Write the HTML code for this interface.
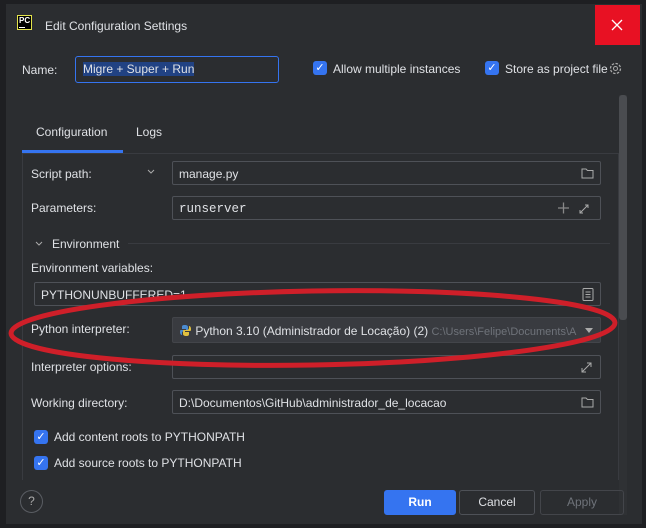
<!DOCTYPE html>
<html><head><style>
*{box-sizing:border-box;margin:0;padding:0}
body{width:646px;height:528px;background:#1e1f22;font-family:"Liberation Sans",sans-serif;color:#dfe1e5;font-size:12px;position:relative;overflow:hidden}
.dlg{position:absolute;left:6px;top:4px;width:636px;height:520px;background:#2b2d30}
.a{position:absolute;white-space:nowrap}
.f{position:absolute;border:1px solid #4e5157;background:#2b2d30;border-radius:2px;padding:5px 6px;height:24px}
.cb{position:absolute;width:14px;height:14px;background:#3574f0;border-radius:3px;color:#fff;font-size:11px;line-height:14px;text-align:center}
.btn{position:absolute;height:25px;border:1px solid #4e5157;border-radius:3px;text-align:center;line-height:23px}
</style></head><body>
<div class="dlg"></div>
<div class="a" style="left:17px;top:15px;width:15px;height:15px;background:#000;border:1px solid #e3e34a;color:#fff;font-size:8px;font-weight:bold;line-height:9px;padding-left:1px">PC<div style="width:6px;height:1px;background:#fff;margin-top:2px"></div></div>
<div class="a" style="left:45px;top:19px;font-size:12px">Edit Configuration Settings</div>
<div class="a" style="left:595px;top:5px;width:45px;height:40px;background:#e81123"><svg width="45" height="40"><path d="M17 15L27 25M27 15L17 25" stroke="#fff" stroke-width="1.3"/></svg></div>
<div class="a" style="left:22px;top:63px">Name:</div>
<div class="a" style="left:75px;top:56px;width:204px;height:27px;border:1.5px solid #3574f0;border-radius:3px;padding:5px 7px"><span style="background:#214283">Migre + Super + Run</span></div>
<div class="cb" style="left:313px;top:61px">✓</div>
<div class="a" style="left:333px;top:62px">Allow multiple instances</div>
<div class="cb" style="left:485px;top:61px">✓</div>
<div class="a" style="left:505px;top:62px">Store as project file</div>
<svg class="a" style="left:608px;top:61px" width="15" height="15"><circle cx="7.5" cy="7.5" r="5" fill="none" stroke="#aaa" stroke-width="1.3" stroke-dasharray="2.5 1.4"/><circle cx="7.5" cy="7.5" r="2" fill="none" stroke="#aaa"/></svg>
<div class="a" style="left:619px;top:95px;width:8px;height:420px;background:#2f3134"></div>
<div class="a" style="left:619px;top:95px;width:8px;height:225px;background:#4a4c50;border-radius:3px"></div>
<div class="a" style="left:36px;top:125px">Configuration</div>
<div class="a" style="left:136px;top:125px">Logs</div>
<div class="a" style="left:22px;top:150px;width:101px;height:3px;background:#3574f0"></div>
<div class="a" style="left:22px;top:153px;width:597px;height:327px;border:1px solid #393b40;border-bottom:none"></div>
<div class="a" style="left:31px;top:167px">Script path:</div>
<svg class="a" style="left:146px;top:168px" width="10" height="8"><path d="M2 2l3 3 3-3" stroke="#aaa" fill="none"/></svg>
<div class="f" style="left:172px;top:161px;width:429px">manage.py<svg style="position:absolute;right:6px;top:5px" width="13" height="12"><path d="M1 2h4l1.5 1.5H12v7.5H1z" fill="none" stroke="#aaa"/></svg></div>
<div class="a" style="left:31px;top:201px">Parameters:</div>
<div class="f" style="left:172px;top:196px;width:429px;font-family:'Liberation Mono',monospace;font-size:12.5px">runserver<svg style="position:absolute;right:6px;top:4px" width="40" height="14"><path d="M4 7h11M9.5 1.5v11" stroke="#888" stroke-width="1.3"/><path d="M26 12l8-8M31 4h3v3M26 9v3h3" stroke="#aaa" fill="none"/></svg></div>
<svg class="a" style="left:34px;top:240px" width="10" height="8"><path d="M2 2l3 3 3-3" stroke="#aaa" fill="none"/></svg>
<div class="a" style="left:52px;top:237px">Environment</div>
<div class="a" style="left:128px;top:243px;width:482px;height:1px;background:#393b40"></div>
<div class="a" style="left:31px;top:261px">Environment variables:</div>
<div class="f" style="left:34px;top:282px;width:567px">PYTHONUNBUFFERED=1<svg style="position:absolute;right:6px;top:5px" width="12" height="13"><rect x="1" y="0.5" width="10" height="12" rx="1" fill="none" stroke="#aaa"/><path d="M3.5 4h5M3.5 6.5h5M3.5 9h5" stroke="#aaa"/></svg></div>
<div class="a" style="left:31px;top:322px">Python interpreter:</div>
<div class="f" style="left:172px;top:317px;width:429px;height:26px;background:#393b40;border-color:#43454a;padding-top:6px"><svg style="vertical-align:-2px" width="13" height="13"><path d="M6 1C3 1 3 2 3 3v2h4v1H2C1 6 1 7 1 8c0 2 1 3 2 3V9c0-1 1-2 2-2h3c1 0 1-1 1-2V3c0-1-1-2-3-2z" fill="#4a8ad0"/><path d="M7 12c3 0 3-1 3-2V8H6V7h5c1 0 1-1 1-2 0-2-1-3-2-3v2c0 1-1 2-2 2H5C4 6 4 7 4 8v2c0 1 1 2 3 2z" fill="#e0c040"/></svg> Python 3.10 (Administrador de Locação) (2) <span style="color:#6f737a;font-size:11px">C:\Users\Felipe\Documents\A</span><svg style="position:absolute;right:6px;top:9px" width="10" height="7"><path d="M1 1h8L5 6z" fill="#aaa"/></svg></div>
<div class="a" style="left:31px;top:360px">Interpreter options:</div>
<div class="f" style="left:172px;top:355px;width:429px"><svg style="position:absolute;right:6px;top:4px" width="14" height="14"><path d="M2 12l9-9M7 3h4v4M2 8v4h4" stroke="#aaa" fill="none"/></svg></div>
<div class="a" style="left:31px;top:396px">Working directory:</div>
<div class="f" style="left:172px;top:390px;width:429px">D:\Documentos\GitHub\administrador_de_locacao<svg style="position:absolute;right:6px;top:5px" width="13" height="12"><path d="M1 2h4l1.5 1.5H12v7.5H1z" fill="none" stroke="#aaa"/></svg></div>
<div class="cb" style="left:34px;top:430px">✓</div>
<div class="a" style="left:54px;top:430px">Add content roots to PYTHONPATH</div>
<div class="cb" style="left:34px;top:456px">✓</div>
<div class="a" style="left:54px;top:456px">Add source roots to PYTHONPATH</div>
<svg class="a" style="left:0;top:0" width="646" height="528"><ellipse cx="313" cy="328" rx="302" ry="37" fill="none" stroke="#cf1f29" stroke-width="5" transform="rotate(-1 313 328)"/></svg>
<div class="a" style="left:20px;top:490px;width:23px;height:23px;border:1px solid #5a5d63;border-radius:50%;text-align:center;line-height:21px;color:#aaa">?</div>
<div class="btn" style="left:384px;top:490px;width:72px;background:#3574f0;border-color:#3574f0;color:#fff;font-weight:bold">Run</div>
<div class="btn" style="left:459px;top:490px;width:76px">Cancel</div>
<div class="btn" style="left:540px;top:490px;width:84px;color:#6f737a;border-color:#43454a">Apply</div>
</body></html>
